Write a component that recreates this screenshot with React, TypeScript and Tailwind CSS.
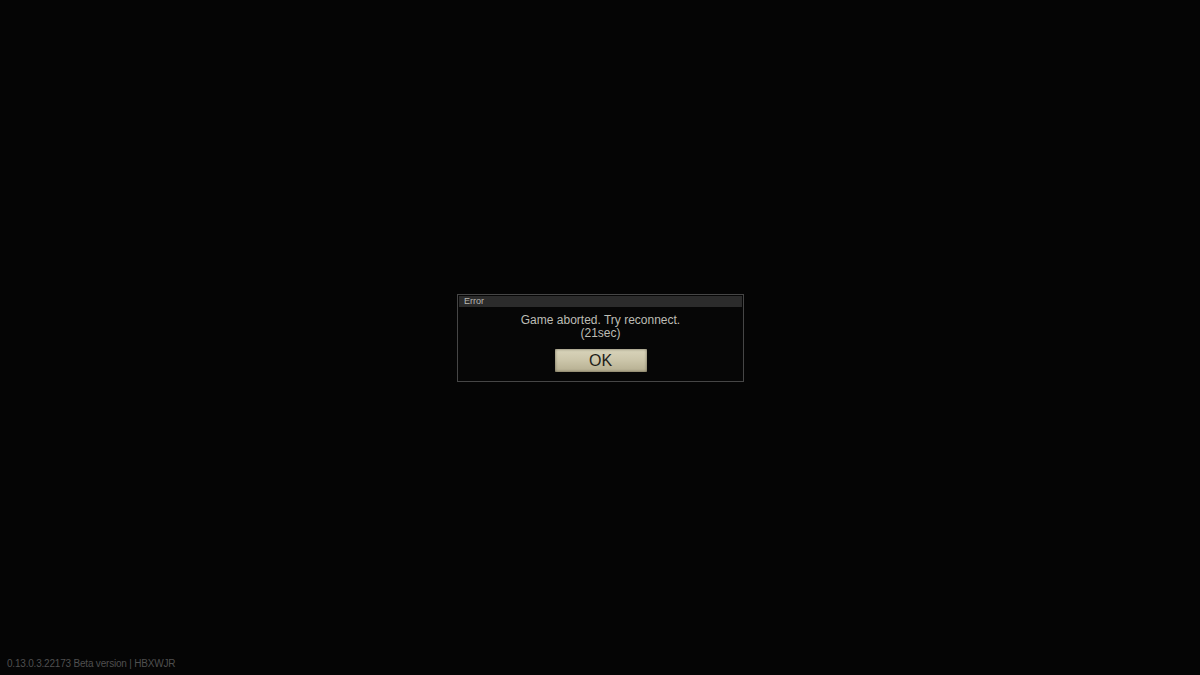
import React from 'react';

const font = { fontFamily: '"Liberation Sans", "DejaVu Sans", sans-serif' };

const ErrorDialog = ({ seconds }: { seconds: number }) => {
	return (
		<div className="w-[287px] h-[88px] border border-[#464646] bg-[#060606] p-px flex flex-col">
			<div className="h-[11px] bg-[#2b2b2b] flex items-center pl-[5px]">
				<span className="text-[9px] leading-none text-[#b9b9b2]">Error</span>
			</div>
			<div className="flex flex-col items-center pt-[7px]">
				<span className="text-[12px] leading-[13px] text-[#bdbdb5]">Game aborted. Try reconnect.</span>
				<span className="text-[12px] leading-[13px] text-[#bdbdb5]">({seconds}sec)</span>
				<button className="mt-[9px] w-[92px] h-[23px] rounded-[1px] bg-gradient-to-b from-[#d9d4bb] via-[#cbc5a9] to-[#b5ae90] shadow-[inset_0_0_3px_rgba(60,55,40,0.7)] flex items-center justify-center">
					<span className="text-[16px] leading-none text-[#1e1e1a]">OK</span>
				</button>
			</div>
		</div>
	);
};

const App = () => {
	return (
		<div className="w-[1200px] h-[675px] bg-[#050505] flex flex-col" style={font}>
			<div className="flex-1 flex items-start justify-center pt-[294px] pl-[1px]">
				<ErrorDialog seconds={21} />
			</div>
			<div className="pl-[7px] pb-[6px] text-[10px] tracking-[-0.2px] leading-none text-[#4f4f4f]">0.13.0.3.22173 Beta version | HBXWJR</div>
		</div>
	);
};

export default App;
